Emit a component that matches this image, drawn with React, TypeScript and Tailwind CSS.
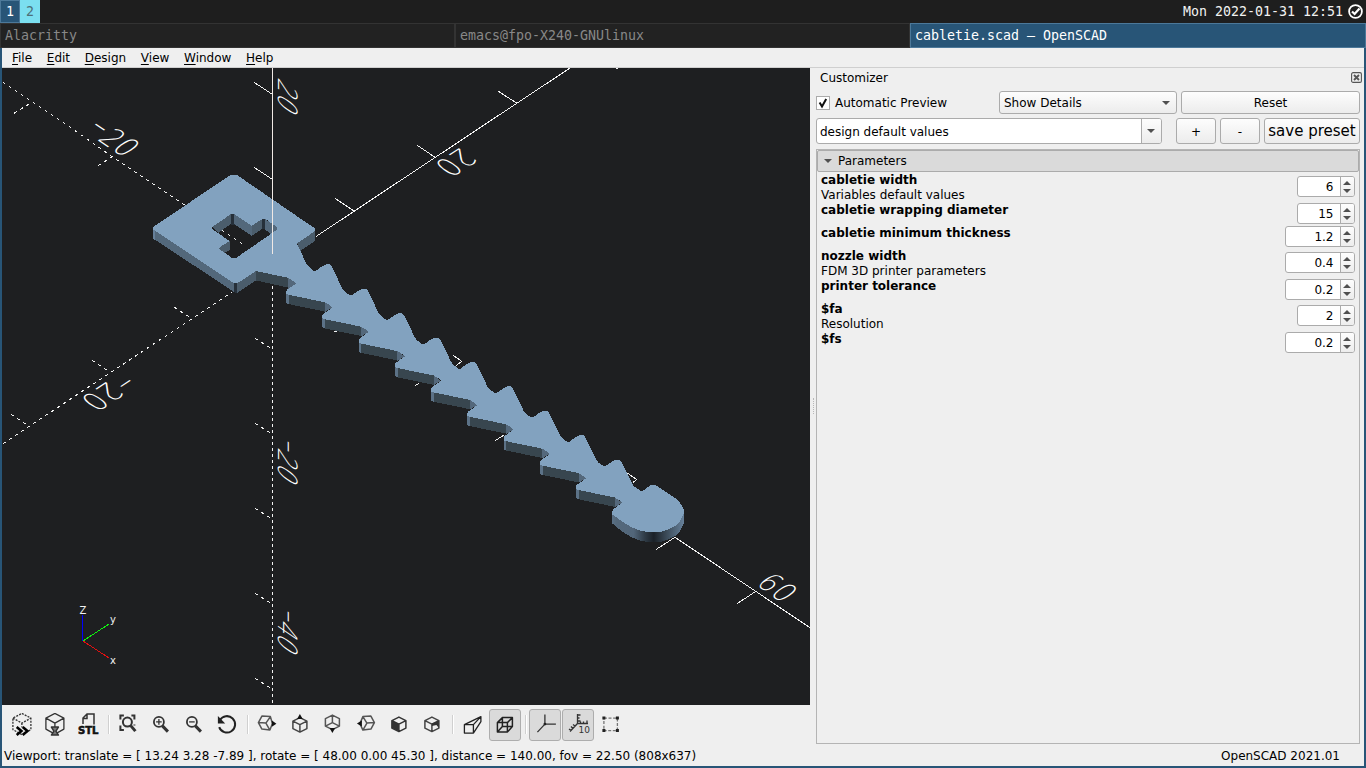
import React from "react";

type Vec = [number, number];

function AxisLabel({ text, origin, advance, up }: { text: string; origin: Vec; advance: Vec; up: Vec }) {
  return (
    <>
      {text.split("").map((ch, i) => {
        const dash = ch === "-";
        const stretch = dash ? 1.6 : 1;
        const shift = dash ? 0.1 : 0;
        const a = (advance[0] / 6.6) * stretch;
        const b = (advance[1] / 6.6) * stretch;
        const c = -up[0] / 7.3;
        const d = -up[1] / 7.3;
        const lift = dash ? 0.2 : 0;
        const x = origin[0] + advance[0] * (i + shift) - a * 0.7 + up[0] * lift;
        const y = origin[1] + advance[1] * (i + shift) - b * 0.7 + up[1] * lift;
        return (
          <text
            key={i}
            transform={`matrix(${a} ${b} ${c} ${d} ${x} ${y})`}
            fontSize="10"
            fontWeight="200"
            fill="#ffffff"
            fontFamily="'DejaVu Sans', sans-serif"
          >
            {ch}
          </text>
        );
      })}
    </>
  );
}

const STEP_X = 36.23;
const STEP_Y = 24.4;

const upperTeeth: Vec[] = [];
for (let n = 0; n < 9; n++) {
  const x = 314.6 + n * STEP_X;
  const y = 271 + n * STEP_Y;
  upperTeeth.push([x - 1, y], [x + 1, y], [x + 8, y - 5], [x + 12, y - 6.6], [x + 15, y - 6.6], [x + 17, y - 4.8], [x + 28, y + 18], [x + 30, y + 20.5]);
}

const lowerTeeth: Vec[] = [];
const lowerIndices = [8, 7, 6, 5, 4, 3, 2, 1, 0];
for (const n of lowerIndices) {
  const x = 286.2 + n * STEP_X;
  const y = 294 + n * STEP_Y;
  lowerTeeth.push([x + 46, y + 13.7], [x + 44, y + 11.5], [x + 38.7, y + 8.3], [x + 2.5, y + 0.8], [x, y], [x, y - 3], [x + 1, y - 4.5]);
}

const tip: Vec[] = [
  [641, 491], [643, 490.6], [648, 487], [651, 485.2], [655, 485.2], [658, 486.7], [670, 494.5], [676.7, 499], [681.7, 505], [683.8, 510], [683.8, 513],
  [680, 521], [675, 526], [667, 530], [660, 532], [648, 532], [640, 530.7], [632, 527.5], [622, 521.5], [612.5, 514.5], [612.3, 511], [613.5, 509],
];

const topFace: Vec[] = [
  [230.5, 175], [237, 175], [315, 228.5], [315, 231], [297, 243.5], [307, 265], [309, 267],
  ...upperTeeth, ...tip, ...lowerTeeth,
  [296, 283.5], [294, 281.5], [288, 277.8], [256, 271], [238, 282.8], [233, 282.8], [153, 229.5], [153, 227],
];

const pts = (list: Vec[]) => list.map((p) => p.join(",")).join(" ");
const facePath =
  "M" + topFace.map((p) => p.join(" ")).join("L") +
  "ZM212.3 227L230.7 214.3L234.3 214.3L251.7 225.7L262 219.3L266 219.3L276.7 227L277.3 229.5L236.7 257.5L231.7 257.7L219.3 249L220 247L229.5 241L212.3 229Z";

function Viewport() {
  return (
    <svg className="block h-[637px] w-[808px] shrink-0 bg-[#1e1f21]" viewBox="2 68 808 637">
      <defs>
        <linearGradient id="tipShade" gradientUnits="userSpaceOnUse" x1="612" y1="0" x2="684" y2="0">
          <stop offset="0" stopColor="#5b7186" />
          <stop offset="0.06" stopColor="#54687b" />
          <stop offset="0.3" stopColor="#52667a" />
          <stop offset="0.46" stopColor="#2f3b46" />
          <stop offset="0.58" stopColor="#1b2128" />
          <stop offset="0.72" stopColor="#35424e" />
          <stop offset="0.85" stopColor="#4c6072" />
          <stop offset="1" stopColor="#66809a" />
        </linearGradient>
      </defs>
      <g stroke="#f2f2f2" strokeWidth="1" fill="none" shapeRendering="crispEdges">
        <g strokeDasharray="3 4.2">
          <path d="M3 82.5L72 128.5L112 156.5L186 206" />
          <path d="M29 104L13 114M112.7 156.5L94.3 168" />
          <path d="M3 443.7L231.7 292.3" />
          <path d="M174.3 307.3L191 318M92.3 360.3L108.3 371M11.3 414.3L28.3 426" />
          <path d="M255 338.3l16 10M255 423.3l16 10M255 508.3l16 10M255 593.3l16 10M255 678.3l16 10" />
        </g>
        <path strokeDasharray="3 3" d="M272.5 286V705" />
        <path d="M315.7 236.7L570 68M335 198.3L354.3 211.3M417.3 145.3L435 157.3M498.3 91.3L517 103.3M616 68.5H618" />
        <path d="M254 82.3L272.3 94.3M254 167.3L272.3 179.3" />
        <path d="M675 537.3L810 627.7M656.3 549.3L675 537.3M737 603.7L755.3 591.7" />
        <path d="M453 355.3L461.7 361.3L456 365.7M461.7 368L467.3 364.3M415.3 385.7L419.3 383M495 440.7L504 435M627.3 473L636.7 479.5L632.7 482.7M334 331.5H337" />
      </g>
      <AxisLabel text="20" origin={[277.5, 78.3]} advance={[0, 14.7]} up={[19.3, 13.3]} />
      <AxisLabel text="-20" origin={[277.5, 433.6]} advance={[0, 14.7]} up={[19.3, 13.3]} />
      <AxisLabel text="-40" origin={[277.5, 603.6]} advance={[0, 14.7]} up={[19.3, 13.3]} />
      <AxisLabel text="20" origin={[458.7, 148.3]} advance={[-14, 9]} up={[18.9, 13]} />
      <AxisLabel text="-20" origin={[120, 372.6]} advance={[-14.4, 9.5]} up={[18.7, 12.8]} />
      <AxisLabel text="-20" origin={[84, 131]} advance={[14, 9.4]} up={[19, -12.6]} />
      <AxisLabel text="60" origin={[756.3, 584.7]} advance={[14, 10]} up={[18.4, -12.5]} />

      <g shapeRendering="crispEdges">
        <polygon fill="#53687b" points="153,228 235,282 235,292.5 153,238.5" />
        <polygon fill="#66809a" points="153,228 155,229.5 155,240 153,238.5" />
        <polygon fill="#4b5d6c" points="235,282 256,271 256,280.5 237,293 235,293" />
        <polygon fill="#26303a" points="233.5,281 237,281 237,293 233.5,292" />
        <polygon fill="#38464f" points="256,270 288,277 288,287.5 256,280.5" />
        <polygon fill="#54687b" points="288,277 296,283.5 288,289" />
        <polygon fill="#4b5d6c" points="297,243 315,230 315,241 300,251" />
        {lowerIndices.map((n) => {
          const x = 286.2 + n * STEP_X;
          const y = 294 + n * STEP_Y;
          return (
            <g key={n}>
              <polygon fill="#38464f" points={pts([[x + 2, y], [x + 38.7, y + 8], [x + 38.7, y + 17.6], [x + 2, y + 10]])} />
              <polygon fill="#5c7287" points={pts([[x, y - 3], [x + 2.7, y], [x + 2.7, y + 10.2], [x, y + 9]])} />
              <polygon fill="#54687b" points={pts([[x + 38.7, y + 7], [x + 46, y + 13.7], [x + 38.7, y + 18]])} />
            </g>
          );
        })}
        <polygon
          fill="url(#tipShade)"
          points="612.3,511 683.8,510 683.8,523 680,531 675,536 667,540 660,542 648,542 640,540.7 632,537.5 622,531.5 612.5,523.5"
        />
        <polygon fill="#4b5d6c" points="212,226 231,214 231,224 218,233" />
        <polygon fill="#26303a" points="230.5,214 234.5,214 234.5,225 230.5,225" />
        <polygon fill="#53687b" points="234,214 252,225 252,236 234,224" />
        <polygon fill="#4b5d6c" points="251.7,225 262,219 262,229 251.7,236" />
        <polygon fill="#26303a" points="261.7,219 265.5,219 265.5,229 261.7,229" />
        <polygon fill="#53687b" points="265,219 278,227 278,230 271,234 265,229.5" />
        <polygon fill="#4b5d6c" points="229.7,241 219,247.5 219,250 224,253 230,250" />
        <path d="M222 230.5L246 246.5" stroke="#f2f2f2" strokeDasharray="3 4.2" fill="none" />
        <path d={facePath} fill="#82a2bf" fillRule="evenodd" />
        <path d="M272.5 68V254" stroke="#f0e9e5" strokeWidth="1" />
        <path d="M83 641L109 658" stroke="#e01010" strokeWidth="1" />
        <path d="M83 641L109 624" stroke="#10f010" strokeWidth="1" />
        <path d="M82.5 615V641" stroke="#0000ff" strokeWidth="1" />
      </g>
      <g fill="#f2f2f2" fontFamily="'DejaVu Sans', sans-serif" fontSize="10">
        <text x="79.4" y="614">Z</text>
        <text x="110" y="623">y</text>
        <text x="110" y="664">x</text>
      </g>
    </svg>
  );
}

function Icon({ children }: { children: React.ReactNode }) {
  return (
    <svg className="block size-6" viewBox="0.1 0.4 24 24" fill="none" stroke="#333" strokeWidth="1.3" strokeLinejoin="round">
      {children}
    </svg>
  );
}

function ToolButton({ pressed = false, children }: { pressed?: boolean; children: React.ReactNode }) {
  return (
    <div className="flex h-[33px] w-[33px] items-center justify-center">
      <div
        className={
          pressed
            ? "flex size-8 items-center justify-center rounded-[3px] border border-[#adadad] bg-[#dadada]"
            : "flex size-8 items-center justify-center"
        }
      >
        {children}
      </div>
    </div>
  );
}

function Separator() {
  return (
    <div className="flex h-[33px] w-[7px] justify-center pl-[2px]">
      <div className="mt-[7px] h-[19px] w-[2px] border-l border-[#d0d0d0] bg-white" />
    </div>
  );
}

function Toolbar() {
  return (
    <div className="flex h-[39px] shrink-0 items-start bg-[#efefef] pl-[3px] pt-[3px]">
      <ToolButton>
        <Icon>
          <path strokeDasharray="2 1.2" d="M12 0.8L21 5.5V17L12 22L3 17V5.5ZM3 5.5L12 10.5L21 5.5M12 10.5V15" />
          <path stroke="#000" strokeWidth="2.6" strokeLinejoin="miter" d="M6.8 14.5L11.5 18.5L6.8 22.5M12.8 14.5L17.5 18.5L12.8 22.5" />
        </Icon>
      </ToolButton>
      <ToolButton>
        <Icon>
          <path d="M12 0.8L21 5.5V16.5L12 21.5L3 16.5V5.5ZM3 5.5L12 10.5L21 5.5M12 10.5V15" />
          <path strokeWidth="1.5" fill="#777" d="M8.5 14.5H15.5L13 18.5L15.5 22.5H8.5L11 18.5Z" />
        </Icon>
      </ToolButton>
      <ToolButton>
        <svg className="block size-6" viewBox="0 0 24 24">
          <path d="M7 11V5L11 1H18V11.5M7 5.5H11V1.5" fill="none" stroke="#333" strokeWidth="1.5" />
          <text x="2" y="21" fontFamily="'DejaVu Sans', sans-serif" fontWeight="700" fontSize="10.5" textLength="20.5" lengthAdjust="spacingAndGlyphs" stroke="#111" strokeWidth="0.6" fill="#111">
            STL
          </text>
        </svg>
      </ToolButton>
      <Separator />
      <ToolButton>
        <Icon>
          <path strokeWidth="2" strokeLinejoin="miter" d="M4.5 7V3H8M15.5 3H18.5V7M4.5 13V17.5H8M18.5 13V12" />
          <circle cx="11.5" cy="9.5" r="4.5" strokeWidth="2" />
          <path strokeWidth="3" d="M14.8 13L19.5 18.5" />
        </Icon>
      </ToolButton>
      <ToolButton>
        <Icon>
          <circle cx="10" cy="9.3" r="5" strokeWidth="1.8" />
          <path d="M7.2 9.3H12.8M10 6.5V12.1" />
          <path strokeWidth="3" d="M13.5 13.3L19 19" />
        </Icon>
      </ToolButton>
      <ToolButton>
        <Icon>
          <circle cx="10" cy="9.3" r="5" strokeWidth="1.8" />
          <path d="M7.2 9.3H12.8" />
          <path strokeWidth="3" d="M13.5 13.3L19 19" />
        </Icon>
      </ToolButton>
      <ToolButton>
        <Icon>
          <path stroke="#222" strokeWidth="2" d="M5 7.5A8.2 8.2 0 1 1 4.3 14.5" />
          <path fill="#222" stroke="none" d="M3 3.5V10.8H10.3Z" />
        </Icon>
      </ToolButton>
      <Separator />
      <ToolButton>
        <Icon>
          <path stroke="#555" strokeWidth="1.5" d="M7 3.5L15.5 4L17.5 11L15 17.5L7 16.5L3.5 10ZM3.5 10L11 10.5L15.5 4M11 10.5L15 17.5" />
          <path fill="#111" stroke="none" d="M17 8L21.5 11.2L17 14.2Z" />
        </Icon>
      </ToolButton>
      <ToolButton>
        <Icon>
          <path stroke="#444" strokeWidth="1.5" d="M12 5L19 8.5V16L12 19.5L5 16V8.5ZM5 8.5L12 12L19 8.5M12 12V19.5" />
          <path fill="#111" stroke="none" d="M12 1.5L14.8 6.5H9.2Z" />
        </Icon>
      </ToolButton>
      <ToolButton>
        <Icon>
          <path stroke="#555" strokeWidth="1.5" d="M11.5 2.5L18.5 6V13.5L11.5 17L4.5 13.5V6ZM4.5 13.5L11.5 10L18.5 13.5M11.5 10V2.5" />
          <path fill="#111" stroke="none" d="M11.5 20.5L14.3 15.5H8.7Z" />
        </Icon>
      </ToolButton>
      <ToolButton>
        <Icon>
          <path stroke="#555" strokeWidth="1.5" d="M9 4L17 3.5L20.5 10L17 16.5L9 17.5L6 11ZM9 4L13 10.5L20.5 10M13 10.5L9 17.5" />
          <path fill="#111" stroke="none" d="M3 10.8L8 7.8V13.8Z" />
        </Icon>
      </ToolButton>
      <ToolButton>
        <Icon>
          <path stroke="#333" strokeWidth="1.5" d="M12 4.5L19 8V15.5L12 19L5 15.5V8ZM5 8L12 11.5L19 8M12 11.5V19" />
          <path fill="#333" stroke="none" d="M5 8L12 11.5V19L5 15.5Z" />
        </Icon>
      </ToolButton>
      <ToolButton>
        <Icon>
          <path stroke="#444" strokeWidth="1.5" d="M12 4.5L19 8V15.5L12 19L5 15.5V8ZM5 8L12 11.5L19 8M12 11.5V19" />
          <path fill="#333" stroke="none" d="M12 11L19 8V15.5L16.5 12.5L12 13.5Z" />
        </Icon>
      </ToolButton>
      <Separator />
      <ToolButton>
        <Icon>
          <path stroke="#222" d="M4.5 12H13.5V20.5H4.5ZM4.5 12L21 4L13.5 12M21 4V9L13.5 20.5" />
        </Icon>
      </ToolButton>
      <ToolButton pressed>
        <Icon>
          <path stroke="#222" strokeWidth="1.5" d="M4.5 10H14.5V19.5H4.5ZM9.5 5H19.5V14H9.5ZM4.5 10L9.5 5M14.5 10L19.5 5M14.5 19.5L19.5 14M4.5 19.5L9.5 14" />
        </Icon>
      </ToolButton>
      <Separator />
      <ToolButton pressed>
        <Icon>
          <path stroke="#333" d="M12 2V11.5L4.5 19.5M12 11.5H23" />
          <circle cx="12" cy="11.5" r="1.4" fill="#222" stroke="none" />
        </Icon>
      </ToolButton>
      <ToolButton pressed>
        <svg className="block size-6" viewBox="0 0 24 24">
          <path d="M11.5 1V10.5H22M11.5 2H14.5M11.5 5H13.5M11.5 8H14.5M14.5 10.5V8.5M17.5 10.5V8.5M21 10.5V7.5M11.5 10.5L4 18.5M9 13L7 11.5M7 15.5L5 13.5M5 17.5L3 16" fill="none" stroke="#333" strokeWidth="1.3" />
          <text x="12.5" y="20" fontFamily="'DejaVu Sans', sans-serif" fontSize="9" fill="#333">
            10
          </text>
        </svg>
      </ToolButton>
      <ToolButton>
        <Icon>
          <path stroke="#777" strokeDasharray="3 1.6" d="M5 5.5H18.5V18H5Z" />
          <path fill="#222" stroke="none" d="M3.5 4h3v3h-3zM17 4h3v3h-3zM3.5 16.5h3v3h-3zM17 16.5h3v3h-3z" />
        </Icon>
      </ToolButton>
    </div>
  );
}

function SpinBox({ value, wide }: { value: string; wide: boolean }) {
  return (
    <div
      className={
        (wide ? "w-[70px]" : "w-[58px]") +
        " flex h-[21px] overflow-hidden rounded-[3px] border border-[#ababab] bg-white"
      }
    >
      <div className="flex-1 pr-[6.5px] text-right leading-[20px]">{value}</div>
      <div className="flex w-[14px] flex-col items-center justify-center gap-[4px] border-l border-[#ababab] bg-gradient-to-b from-[#fdfdfd] to-[#ededed] pr-px">
        <svg className="block h-1 w-2" viewBox="0 0 8 4">
          <path d="M0 4L4 0L8 4Z" fill="#505050" />
        </svg>
        <svg className="block h-1 w-2" viewBox="0 0 8 4">
          <path d="M0 0L4 4L8 0Z" fill="#505050" />
        </svg>
      </div>
    </div>
  );
}

const parameters = [
  { name: "cabletie width", note: "Variables default values", value: "6", wide: false },
  { name: "cabletie wrapping diameter", note: "", value: "15", wide: false },
  { name: "cabletie minimum thickness", note: "", value: "1.2", wide: true },
  { name: "nozzle width", note: "FDM 3D printer parameters", value: "0.4", wide: true },
  { name: "printer tolerance", note: "", value: "0.2", wide: true },
  { name: "$fa", note: "Resolution", value: "2", wide: false },
  { name: "$fs", note: "", value: "0.2", wide: true },
];

function Arrow() {
  return (
    <svg className="block h-1 w-2" viewBox="0 0 8 4">
      <path d="M0 0L4 4L8 0Z" fill="#505050" />
    </svg>
  );
}

const raised = "rounded-[3px] border border-[#ababab] bg-gradient-to-b from-[#fdfdfd] to-[#ececec]";

function Customizer() {
  return (
    <div className="flex w-[554px] shrink-0 bg-[#efefef]">
      <div className="flex w-[6px] items-center justify-center">
        <div className="h-4 w-0 border-l border-dotted border-[#b8b8b8]" />
      </div>
      <div className="flex w-[544px] flex-col">
        <div className="flex h-[23px] justify-between pl-1">
          <span className="pt-px leading-[19px]">Customizer</span>
          <svg className="-mr-[2px] mt-[4px] block size-[11px]" viewBox="0 0 11 11">
            <rect x="0.6" y="0.6" width="9.8" height="9.8" rx="1.5" fill="none" stroke="#555" strokeWidth="1.1" />
            <path d="M3 3L8 8M8 3L3 8" stroke="#555" strokeWidth="1.9" />
          </svg>
        </div>
        <div className="flex h-[23px] items-center">
          <div className="flex w-[183px] items-center">
            <svg className="block size-[14px]" viewBox="0 0 14 14">
              <rect x="0.5" y="0.5" width="13" height="13" fill="#fff" stroke="#ababab" />
              <path d="M3.6 6.5L6 10.5L10.2 3" fill="none" stroke="#111" strokeWidth="2" />
            </svg>
            <span className="pl-[5px]">Automatic Preview</span>
          </div>
          <div className={raised + " mr-1 flex h-[23px] w-[178px] items-center justify-between pl-1 pr-[6px]"}>
            <span>Show Details</span>
            <Arrow />
          </div>
          <div className={raised + " flex h-[23px] w-[179px] items-center justify-center"}>Reset</div>
        </div>
        <div className="mt-[4px] flex h-[26px]">
          <div className="flex w-[346px] overflow-hidden rounded-[3px] border border-[#ababab] bg-white">
            <span className="flex-1 pl-[3px] pt-px leading-[25px]">design default values</span>
            <div className="flex w-5 items-center justify-center border-l border-[#ababab] bg-gradient-to-b from-[#fdfdfd] to-[#ececec] pr-[2px]">
              <Arrow />
            </div>
          </div>
          <div className={raised + " ml-[14px] flex w-10 items-center justify-center pt-px"}>+</div>
          <div className={raised + " ml-1 flex w-10 items-center justify-center pt-px"}>-</div>
          <div className={raised + " ml-1 flex w-24 items-center justify-center whitespace-nowrap text-[15px]"}>save preset</div>
        </div>
        <div className="mt-[5px] flex-1 border border-[#b4b4b4]">
          <div className="mb-px flex h-[22px] items-center gap-[6px] rounded-[2px] border border-[#ababab] bg-[#dadada] pl-[6px]">
            <Arrow />
            <span className="leading-5">Parameters</span>
          </div>
          <div className="pl-1 pr-1">
            {parameters.map((p) => (
              <div key={p.name} className={p.note ? "flex h-[30px] justify-between" : "flex h-[23px] justify-between"}>
                <div className="leading-[15px]">
                  <div className="font-bold">{p.name}</div>
                  {p.note && <div>{p.note}</div>}
                </div>
                <div className={p.note ? "pt-[3px]" : ""}>
                  <SpinBox value={p.value} wide={p.wide} />
                </div>
              </div>
            ))}
          </div>
        </div>
      </div>
    </div>
  );
}

const menus = ["File", "Edit", "Design", "View", "Window", "Help"];

export default function App() {
  return (
    <div className="flex h-[768px] w-[1366px] flex-col overflow-hidden bg-[#285577] font-['DejaVu_Sans',sans-serif] text-[12px] text-black">
      <div className="flex h-[23px] shrink-0 bg-[#1e1e1e] font-['DejaVu_Sans_Mono',monospace] text-[13.29px] leading-[23px]">
        <div className="w-5 border border-[#4c7899] bg-[#285577] text-center leading-[21px] text-white">1</div>
        <div className="w-5 bg-[#7bdff0] text-center text-[#4c7078]">2</div>
        <div className="flex flex-1 items-center justify-end gap-[5px] pr-[3px] text-[#f2f2f2]">
          <span>Mon 2022-01-31 12:51</span>
          <svg className="block size-[15px]" viewBox="0 0 15 15">
            <circle cx="7.5" cy="7.5" r="6.4" fill="none" stroke="#fff" strokeWidth="1.8" />
            <path d="M4 7.5L6.6 10L11.5 4.5" fill="none" stroke="#fff" strokeWidth="2.2" />
          </svg>
        </div>
      </div>
      <div className="flex h-[25px] shrink-0 font-['DejaVu_Sans_Mono',monospace] text-[13.29px] leading-[23px] text-[#888888]">
        <div className="w-[455px] border border-[#333] bg-[#222] pl-1">Alacritty</div>
        <div className="w-[455px] border border-[#333] bg-[#222] pl-1">emacs@fpo-X240-GNUlinux</div>
        <div className="flex-1 border border-[#4c7899] bg-[#285577] pl-1 text-white">cabletie.scad — OpenSCAD</div>
      </div>
      <div className="mx-[2px] flex h-[718px] flex-col bg-[#efefef]">
        <div className="flex h-5 shrink-0 gap-[14.7px] border-b border-[#cfcfcf] pl-[10px] pt-px leading-[19px]">
          {menus.map((m) => (
            <span key={m}>
              <span className="underline decoration-1 underline-offset-2">{m[0]}</span>
              {m.slice(1)}
            </span>
          ))}
        </div>
        <div className="flex h-[676px] shrink-0">
          <div className="flex w-[808px] shrink-0 flex-col">
            <Viewport />
            <Toolbar />
          </div>
          <Customizer />
        </div>
        <div className="flex flex-1 justify-between pl-[2px] pr-6 pt-px leading-[23px]">
          <span className="tracking-[-0.008px]">Viewport: translate = [ 13.24 3.28 -7.89 ], rotate = [ 48.00 0.00 45.30 ], distance = 140.00, fov = 22.50 (808x637)</span>
          <span>OpenSCAD 2021.01</span>
        </div>
      </div>
    </div>
  );
}
